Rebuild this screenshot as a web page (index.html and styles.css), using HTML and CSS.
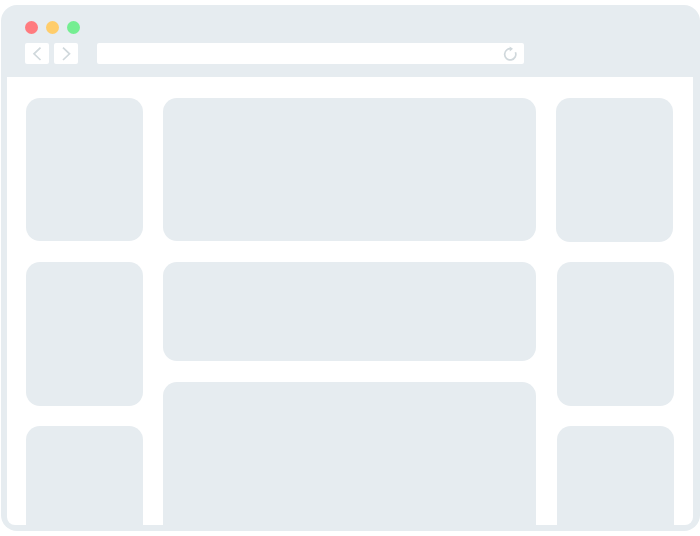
FILE: index.html
```html
<!DOCTYPE html>
<html lang="en">
<head>
    <meta charset="UTF-8">
    <title>Browser wireframe</title>
    <link rel="stylesheet" href="styles.css">
</head>
<body>
    <div class="browser">
        <div class="toolbar">
            <div class="dots">
                <span class="dot dot-red"></span>
                <span class="dot dot-yellow"></span>
                <span class="dot dot-green"></span>
            </div>
            <div class="nav">
                <div class="nav-btn">
                    <svg width="24" height="22" viewBox="0 0 24 22"><path d="M15.5 4.6 L9 10.8 L15.5 17" class="icon-line"/></svg>
                </div>
                <div class="nav-btn">
                    <svg width="24" height="22" viewBox="0 0 24 22"><path d="M9 4.6 L15.5 10.8 L9 17" class="icon-line"/></svg>
                </div>
                <div class="address">
                    <svg width="16" height="16" viewBox="0 0 16 16"><path d="M9.6 2.9 A5.6 5.6 0 1 0 13.4 6.2" class="icon-line"/><path d="M7.6 0.4 L11 2.8 L7.8 5.4 Z" class="icon-fill"/></svg>
                </div>
            </div>
        </div>
        <div class="content">
            <div class="col col-side">
                <div class="card card-top"></div>
                <div class="card card-mid"></div>
                <div class="card card-cut"></div>
            </div>
            <div class="col col-main">
                <div class="card card-top"></div>
                <div class="card card-short"></div>
                <div class="card card-cut"></div>
            </div>
            <div class="col col-side col-right">
                <div class="card card-first"></div>
                <div class="card card-mid"></div>
                <div class="card card-cut"></div>
            </div>
        </div>
    </div>
</body>
</html>
```

FILE: styles.css
```css
* { margin: 0; padding: 0; box-sizing: border-box; }

body {
    background-color: #fff;
    padding: 5px 0 0 1px;
    height: 536px;
    overflow: hidden;
}

.browser {
    width: 699px;
    height: 526px;
    display: flex;
    flex-direction: column;
    background-color: #e6ecf0;
    border-radius: 16px;
    padding: 0 7px 6px 6px;
}

.toolbar {
    height: 72px;
    flex-shrink: 0;
    padding: 16px 0 0 17.8px;
}

.dots {
    display: flex;
    gap: 8px;
}

.dot {
    width: 13px;
    height: 13px;
    border-radius: 50%;
}

.dot-red { background-color: #ff7b7f; }
.dot-yellow { background-color: #ffcd6b; }
.dot-green { background-color: #75ee92; }

.nav {
    display: flex;
    margin-top: 8.5px;
    margin-left: 0.5px;
}

.nav-btn {
    width: 24px;
    height: 21.5px;
    margin-right: 5px;
    background-color: #fff;
    border-radius: 2px;
}

.nav-btn svg, .address svg {
    display: block;
}

.address {
    width: 427px;
    height: 21.5px;
    margin-left: 13.7px;
    background-color: #fff;
    border-radius: 2px;
    display: flex;
    align-items: center;
    justify-content: flex-end;
    padding: 1px 6px 0 0;
}

.icon-line {
    fill: none;
    stroke: #d0d8dc;
    stroke-width: 1.7;
}

.icon-fill {
    fill: #d0d8dc;
}

.content {
    flex: 1;
    min-height: 0;
    display: flex;
    background-color: #fff;
    border-radius: 0 0 8px 8px;
    padding: 21px 19px 0 19px;
}

.col {
    display: flex;
    flex-direction: column;
}

.col-side { width: 117.3px; }
.col-main { width: 373.3px; margin: 0 20.4px 0 20px; }

.card {
    background-color: #e6ecf0;
    border-radius: 14px;
}

.card-top { height: 143px; margin-bottom: 21px; }
.card-mid { height: 144px; margin-bottom: 20px; }
.card-short { height: 99px; margin-bottom: 21px; }

.card-first {
    height: 144px;
    margin: 0 1px 20px -1px;
}

.card-cut {
    flex: 1;
    border-radius: 14px 14px 0 0;
}
```
